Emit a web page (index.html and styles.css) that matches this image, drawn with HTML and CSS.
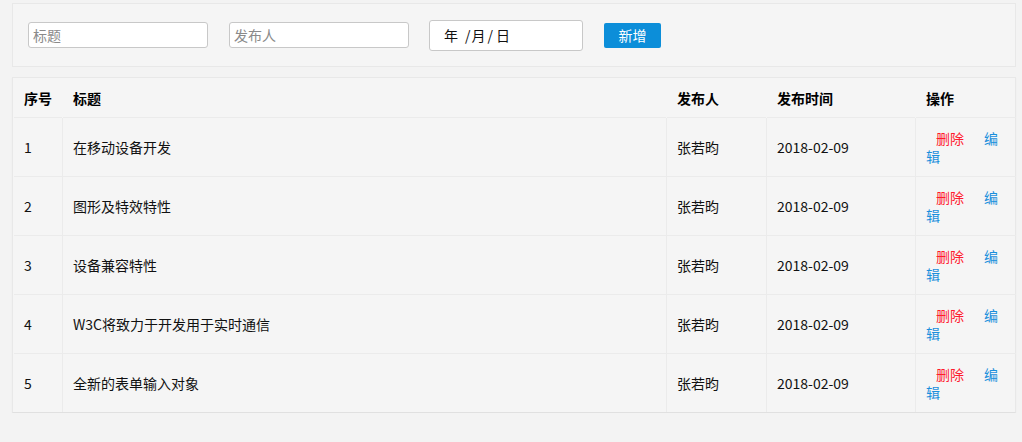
FILE: index.html
```html
<!DOCTYPE html>
<html>
<head>
  <meta charset="utf-8">
  <title>新闻列表</title>
  <link rel="stylesheet" href="styles.css">
</head>
<body>
  <div class="wrap">
    <div class="toolbar">
      <input type="text" class="field" placeholder="标题">
      <input type="text" class="field field-author" placeholder="发布人">
      <div class="date-field"><span class="d-year">年</span><span class="d-sep">/</span><span>月</span><span class="d-sep d-sep2">/</span><span>日</span></div>
      <button type="button" class="btn-add">新增</button>
    </div>

    <div class="panel">
      <table class="list">
        <colgroup>
          <col class="c-no">
          <col class="c-title">
          <col class="c-author">
          <col class="c-time">
          <col class="c-op">
        </colgroup>
        <thead>
          <tr>
            <th>序号</th>
            <th>标题</th>
            <th>发布人</th>
            <th>发布时间</th>
            <th>操作</th>
          </tr>
        </thead>
        <tbody>
          <tr>
            <td>1</td>
            <td>在移动设备开发</td>
            <td>张若昀</td>
            <td>2018-02-09</td>
            <td class="ops"><a href="#" class="del">删除</a><a href="#" class="edit">编辑</a></td>
          </tr>
          <tr>
            <td>2</td>
            <td>图形及特效特性</td>
            <td>张若昀</td>
            <td>2018-02-09</td>
            <td class="ops"><a href="#" class="del">删除</a><a href="#" class="edit">编辑</a></td>
          </tr>
          <tr>
            <td>3</td>
            <td>设备兼容特性</td>
            <td>张若昀</td>
            <td>2018-02-09</td>
            <td class="ops"><a href="#" class="del">删除</a><a href="#" class="edit">编辑</a></td>
          </tr>
          <tr>
            <td>4</td>
            <td>W3C将致力于开发用于实时通信</td>
            <td>张若昀</td>
            <td>2018-02-09</td>
            <td class="ops"><a href="#" class="del">删除</a><a href="#" class="edit">编辑</a></td>
          </tr>
          <tr>
            <td>5</td>
            <td>全新的表单输入对象</td>
            <td>张若昀</td>
            <td>2018-02-09</td>
            <td class="ops"><a href="#" class="del">删除</a><a href="#" class="edit">编辑</a></td>
          </tr>
        </tbody>
      </table>
    </div>
  </div>
</body>
</html>
```

FILE: styles.css
```css
body {
  margin: 0;
  padding: 0;
  background-color: #f3f3f3;
  font-family: "Noto Sans CJK SC", "Noto Sans", sans-serif;
  font-size: 14px;
  color: #111;
}

.wrap {
  padding: 3px 6px 0 12px;
}

.toolbar {
  display: flex;
  align-items: center;
  gap: 20px;
  height: 62px;
  padding-left: 15px;
  background-color: #f5f5f5;
  border: 1px solid #e8e8e8;
}

.field {
  width: 180px;
  height: 26px;
  box-sizing: border-box;
  padding: 0 4px;
  border: 1px solid #c8c8c8;
  border-radius: 3px;
  background: #fff;
  font-family: inherit;
  font-size: 14px;
  outline: none;
}

.field-author {
  margin-left: 1px;
}

.field::placeholder {
  color: #8a8a8a;
}

.date-field {
  width: 154px;
  height: 31px;
  box-sizing: border-box;
  padding-left: 14px;
  border: 1px solid #c8c8c8;
  border-radius: 3px;
  background: #fff;
  line-height: 29px;
  color: #111;
}

.d-year {
  margin-right: 7px;
}

.d-sep {
  margin-right: 1px;
}

.d-sep2 {
  margin-left: 2px;
  margin-right: 3px;
}

.btn-add {
  width: 57px;
  height: 25px;
  margin-left: 1px;
  padding: 0;
  border: none;
  border-radius: 2px;
  background-color: #0c8ed9;
  color: #fff;
  font-family: inherit;
  font-size: 14px;
  cursor: pointer;
}

.panel {
  margin-top: 10px;
  background-color: #f5f5f5;
  border: 1px solid #e8e8e8;
  border-bottom-color: #e0e0e0;
  box-shadow: 0 1px 1px rgba(0,0,0,0.05);
}

.list {
  width: 100%;
  table-layout: fixed;
  border-collapse: collapse;
}

.c-no { width: 49px; }
.c-title { width: 604px; }
.c-author { width: 100px; }
.c-time { width: 149px; }
.c-op { width: 100px; }

.list th {
  height: 39px;
  padding: 0 10px;
  border-left: 1px solid transparent;
  text-align: left;
  font-weight: bold;
  color: #000;
  vertical-align: middle;
}

.list td {
  height: 58px;
  padding: 0 10px;
  border-top: 1px solid #ebebeb;
  border-left: 1px solid #ebebeb;
  vertical-align: middle;
  line-height: 20px;
}

.list td:first-child {
  border-left-color: transparent;
}

.list td.ops {
  line-height: 18px;
}

.ops a {
  padding: 0 10px;
  text-decoration: none;
}

.ops a.del {
  color: #ff1a2e;
}

.ops a.edit {
  color: #1a8fdc;
}
```
